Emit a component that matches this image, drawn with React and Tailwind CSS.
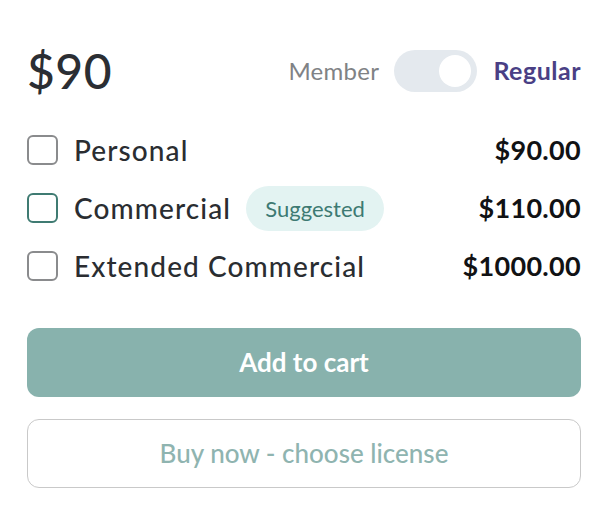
export default function App() {
  const rows = [
    { label: "Personal", price: "$90.00", suggested: false },
    { label: "Commercial", price: "$110.00", suggested: true },
    { label: "Extended Commercial", price: "$1000.00", suggested: false },
  ];
  return (
    <div className="w-[615px] h-[507px] bg-white pl-[27px] pr-[34px] pt-[44px] font-['Lato',sans-serif]">
      <div className="flex items-center justify-between h-[54px]">
        <div className="text-[48px] leading-none text-[#2b2e33] font-medium tracking-[0.5px]">$90</div>
        <div className="flex items-center">
          <span className="text-[24px] text-[#808285] mr-[15px] tracking-[0.3px]">Member</span>
          <div className="w-[83px] h-[42px] rounded-full bg-[#e4e9ee] relative">
            <div className="absolute right-[6px] top-[5px] w-[32px] h-[32px] rounded-full bg-white" />
          </div>
          <span className="text-[25px] text-[#4a3f85] font-bold ml-[16px] tracking-[0.5px]">Regular</span>
        </div>
      </div>
      <div className="mt-[23px] flex flex-col">
        {rows.map((r) => (
          <div key={r.label} className="flex items-center justify-between h-[58px]">
            <div className="flex items-center">
              <div
                className={
                  "w-[31px] h-[30px] rounded-[6px] border-2 " +
                  (r.suggested ? "border-[#3f7b72]" : "border-[#8a8b8d]")
                }
              />
              <span className="ml-[16px] text-[28px] text-[#2a2d31] font-medium tracking-[1.1px]">{r.label}</span>
              {r.suggested && (
                <span className="ml-[15px] h-[45px] w-[138px] rounded-full bg-[#e3f3f2] text-[#3d7a73] text-[22px] flex items-center justify-center">
                  Suggested
                </span>
              )}
            </div>
            <span className="text-[27px] font-bold text-[#111214] tracking-[0.3px]">{r.price}</span>
          </div>
        ))}
      </div>
      <button className="mt-[33px] w-full h-[69px] rounded-[12px] bg-[#88b2ad] text-white text-[26px] font-bold flex items-center justify-center">
        Add to cart
      </button>
      <button className="mt-[22px] w-full h-[69px] rounded-[12px] border border-[#c9c9c9] bg-white text-[#8fb4b0] text-[26px] font-medium flex items-center justify-center">
        Buy now - choose license
      </button>
    </div>
  );
}
